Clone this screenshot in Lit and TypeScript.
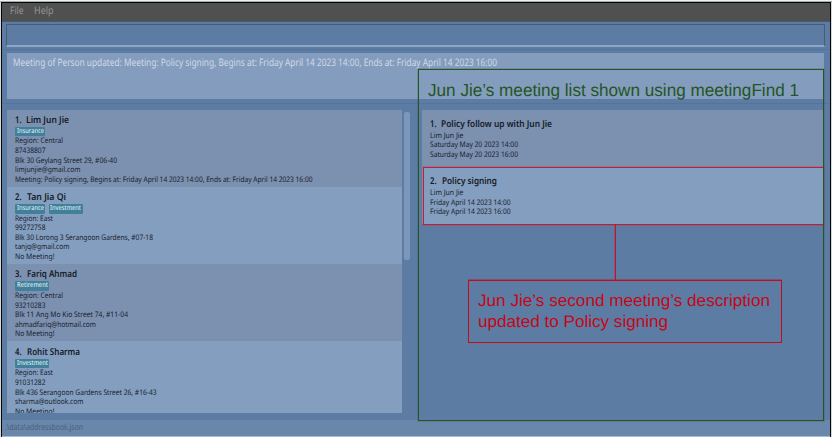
import { LitElement, html, css } from "lit";
import { customElement, property } from "lit/decorators.js";

/** A single line of text, condensed or widened so that it fills the given width. */
@customElement("fit-text")
class FitText extends LitElement {
  @property() text = "";
  @property({ type: Number }) width = 0;
  static styles = css`
    :host { display: block; white-space: pre; line-height: inherit; }
    span { display: inline-block; line-height: inherit; vertical-align: top; transform-origin: 0 0; }
  `;
  render() {
    return html`<span>${this.text}</span>`;
  }
  updated() {
    const span = this.renderRoot.querySelector("span") as HTMLElement;
    const natural = span.offsetWidth && span.getBoundingClientRect().width;
    if (this.width && natural) span.style.transform = `scaleX(${this.width / natural})`;
  }
}

type Line = [string, number];
interface Person { no: string; name: Line; indent: number; tags: Line[]; lines: Line[]; }

const people: Person[] = [
  { no: "1.", name: ["Lim Jun Jie", 43], indent: 11, tags: [["Insurance", 27]],
    lines: [["Region: Central", 48], ["87438807", 30.5], ["Blk 30 Geylang Street 29, #06-40", 102], ["limjunjie@gmail.com", 65.5],
      ["Meeting: Policy signing, Begins at: Friday April 14 2023 14:00, Ends at: Friday April 14 2023 16:00", 297.5]] },
  { no: "2.", name: ["Tan Jia Qi", 39], indent: 12, tags: [["Insurance", 27], ["Investment", 31]],
    lines: [["Region: East", 38], ["99272758", 30.5], ["Blk 30 Lorong 3 Serangoon Gardens, #07-18", 138], ["tanjq@gmail.com", 54.5], ["No Meeting!", 39.5]] },
  { no: "3.", name: ["Fariq Ahmad", 50], indent: 12, tags: [["Retirement", 31]],
    lines: [["Region: Central", 48], ["93210283", 30.5], ["Blk 11 Ang Mo Kio Street 74, #11-04", 113], ["ahmadfariq@hotmail.com", 81], ["No Meeting!", 39.5]] },
  { no: "4.", name: ["Rohit Sharma", 53], indent: 12, tags: [["Investment", 31]],
    lines: [["Region: East", 38], ["91031282", 30.5], ["Blk 436 Serangoon Gardens Street 26, #16-43", 141.5], ["sharma@outlook.com", 68.5], ["No Meeting!", 39.5]] },
];

const meetings: Person[] = [
  { no: "1.", name: ["Policy follow up with Jun Jie", 111], indent: 11, tags: [],
    lines: [["Lim Jun Jie", 33.5], ["Saturday May 20 2023 14:00", 88], ["Saturday May 20 2023 16:00", 88]] },
  { no: "2.", name: ["Policy signing", 55], indent: 12, tags: [],
    lines: [["Lim Jun Jie", 33.5], ["Friday April 14 2023 14:00", 80.5], ["Friday April 14 2023 16:00", 80.5]] },
];

@customElement("app-root")
class AppRoot extends LitElement {
  static styles = css`
    :host { display: block; width: 832px; height: 437px; overflow: hidden; background: #d5d9da;
      font-family: "Noto Sans", "Open Sans", sans-serif; color: #17202d; text-rendering: geometricPrecision; }
    * { box-sizing: border-box; }
    .window { position: relative; width: 830px; height: 435px; margin-left: 1px; border: 1px solid #050607;
      border-bottom-color: #292d35; background: #5c7ca3; display: flex; flex-direction: column; }
    .edge { height: 2px; background: linear-gradient(#eef2f2 50%, #a6adaf 50%); }
    .menu { height: 19px; flex: none; background: #505050; border-bottom: 1px solid #4c596a; display: flex; gap: 11px;
      padding: 0 7.5px; font-size: 10.4px; line-height: 17.5px; color: #959595; }
    .menu fit-text { width: 13.5px; }
    .command { flex: none; height: 23px; margin: 2px 5px 0 4px; border: 1px solid #4a5b74; border-bottom: 2px solid #8fa5c4; }
    .sep { flex: none; height: 1px; margin-top: 2px; background: #54749b; }
    .result-pane { flex: none; height: 54px; padding: 3px 6px 4px 5px; border-bottom: 1px solid #54749b; }
    .result { height: 46px; background: #849dbf; padding: 2.5px 6px; font-size: 10.4px; line-height: 14px; color: #d0d9e5; }
    .lists { flex: none; display: flex; padding: 5.5px 6px 7px 5px; height: 316px; }
    .people { width: 395px; height: 303.5px; overflow: hidden; }
    .track { width: 20px; padding: 2px 0 0 1.5px; }
    .thumb { width: 6px; height: 148px; border-radius: 2px; background: #7b97bb; }
    .meetings { flex: 1; }
    .card { height: 77.33px; padding: 4.2px 0 0 8px; background: #7c91b0; font-size: 7.7px; line-height: 9.6px; }
    .card:nth-child(even) { background: #849ebf; }
    .meetings .card { height: 57.3px; padding-top: 8.7px; }
    .title { display: flex; height: 13.1px; font-size: 9.4px; font-weight: 600; line-height: 12px; color: #141b26; }
    .meetings .title { height: 13.7px; }
    .one { width: 11px; }
    .two { width: 12px; }
    .tags { display: flex; gap: 4px; height: 10.6px; }
    .tag { height: 9.6px; border-radius: 1.2px; background: #417f9b; color: #dce9f0; padding: 0 1.6px;
      font-size: 7px; font-weight: 500; line-height: 9.4px; }
    .w27 { width: 29.7px; }
    .w31 { width: 34px; }
    .status { flex: 1; background: #6986ab; border-bottom: 1px solid #aabcd6; padding-left: 3px; font-size: 8.6px;
      line-height: 15.5px; color: #4d6078; }
    .outline { position: absolute; left: 416px; top: 66px; width: 406px; height: 352px; border: 1px solid #275426;
      box-shadow: 0 0 0 1px rgba(39, 84, 38, 0.2); }
    .caption { padding: 8px 0 0 9px; font: 17.6px/24px "Liberation Sans", Arial, sans-serif; color: #245522; }
    .highlight { position: absolute; left: 421px; top: 164px; width: 401px; height: 58px; border: 1px solid #be1f35;
      box-shadow: 0 0 0 1px rgba(190, 31, 53, 0.2); }
    .stem { position: absolute; left: 613px; top: 221px; width: 1px; height: 56px; background: #c4142a;
      box-shadow: -1px 0 rgba(196, 20, 42, 0.3); }
    .note { position: absolute; left: 466px; top: 277px; width: 314px; height: 63px; border: 1px solid #c20c1d; padding: 9px 9px;
      box-shadow: 0 -1px rgba(194, 12, 29, 0.4);
      font: 16.8px/21px "Liberation Sans", Arial, sans-serif; color: #c50618; }
  `;

  card(p: Person) {
    return html`<div class="card">
      <div class="title"><fit-text class=${p.indent === 11 ? "one" : "two"} .text=${p.no} .width=${6.5}></fit-text>
        <fit-text .text=${p.name[0]} .width=${p.name[1]}></fit-text></div>
      ${p.tags.length
        ? html`<div class="tags">${p.tags.map(([t, w]) => html`<div class="tag w${w}"><fit-text .text=${t} .width=${w}></fit-text></div>`)}</div>`
        : ""}
      ${p.lines.map(([t, w]) => html`<fit-text .text=${t} .width=${w}></fit-text>`)}
    </div>`;
  }

  render() {
    return html`
      <div class="edge"></div>
      <div class="window">
        <div class="menu">
          <fit-text .text=${"File"} .width=${13.5}></fit-text>
          <fit-text .text=${"Help"} .width=${19.5}></fit-text>
        </div>
        <div class="command"></div>
        <div class="sep"></div>
        <div class="result-pane"><div class="result">
          <fit-text .width=${484}
            .text=${"Meeting of Person updated: Meeting: Policy signing, Begins at: Friday April 14 2023 14:00, Ends at: Friday April 14 2023 16:00"}></fit-text>
        </div></div>
        <div class="lists">
          <div class="people">${people.map((p) => this.card(p))}</div>
          <div class="track"><div class="thumb"></div></div>
          <div class="meetings">${meetings.map((p) => this.card(p))}</div>
        </div>
        <div class="status"><fit-text .text=${".\\data\\addressbook.json"} .width=${78}></fit-text></div>
        <div class="highlight"></div>
        <div class="outline"><div class="caption">
          <fit-text .text=${"Jun Jie’s meeting list shown using meetingFind 1"} .width=${371}></fit-text></div></div>
        <div class="stem"></div>
        <div class="note">
          <fit-text .text=${"Jun Jie’s second meeting’s description"} .width=${292}></fit-text>
          <fit-text .text=${"updated to Policy signing"} .width=${190}></fit-text>
        </div>
      </div>
    `;
  }
}
